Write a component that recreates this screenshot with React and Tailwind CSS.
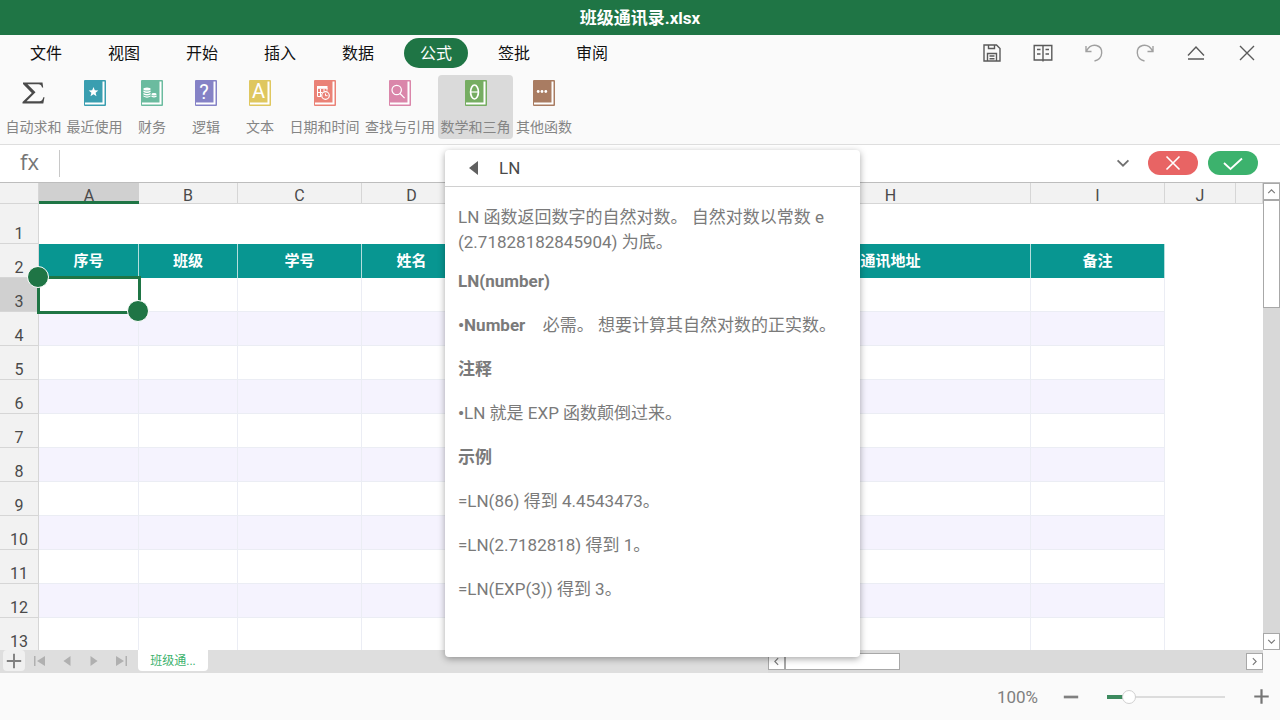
import React from "react";

const MENUS = ["文件", "视图", "开始", "插入", "数据", "公式", "签批", "审阅"];

const glyph = "fill-white font-[Roboto,sans-serif]";

const TOOLS = [
  { label: "最近使用", width: "w-[61px]", color: "#3a9eb0", art: <path fill="#fff" d="M10.5 7l1.3 3.3 3.5.2-2.7 2.3.9 3.4-3-1.9-3 1.9.9-3.4-2.7-2.3 3.5-.2z" /> },
  {
    label: "财务", width: "w-[54px]", color: "#6bbb9f",
    art: (
      <g fill="#fff">
        <ellipse cx="7" cy="9" rx="3.6" ry="1.5" />
        <path d="M3.4 10.6q3.6 2 7.2 0v1.5q-3.6 2-7.2 0zM3.4 13q3.6 2 7.2 0v1.5q-3.6 2-7.2 0zM3.4 15.4q3.6 2 7.2 0v1.2q-3.6 2.2-7.2 0z" />
        <ellipse cx="14" cy="14.3" rx="2.6" ry="1.2" />
        <path d="M11.4 15.6q2.6 1.5 5.2 0v1.2q-2.6 1.6-5.2 0z" />
      </g>
    ),
  },
  { label: "逻辑", width: "w-[54px]", color: "#8582c6", art: <text x="10" y="19" textAnchor="middle" fontSize="20" className={glyph}>?</text> },
  { label: "文本", width: "w-[54px]", color: "#dfc75f", art: <text x="10.5" y="18" textAnchor="middle" fontSize="20" className={glyph}>A</text> },
  {
    label: "日期和时间", width: "w-[75px]", color: "#ea8277",
    art: (
      <g>
        <path fill="#fff" d="M4 6h10.5v2.8H4z" />
        <path fill="none" stroke="#fff" d="M4.5 8v8.5H8M4.5 12.5h5M7.5 9v7.5M11 9v2M14 8v2.5" />
        <circle cx="12.5" cy="15.5" r="3.8" fill="#ea8277" stroke="#fff" strokeWidth="1.2" />
        <path fill="none" stroke="#fff" d="M12.5 13.5v2.2h2" />
      </g>
    ),
  },
  {
    label: "查找与引用", width: "w-[76px]", color: "#da86aa",
    art: (
      <g fill="none" stroke="#fff" strokeWidth="1.2">
        <circle cx="8.7" cy="10" r="4.7" />
        <path d="M12 13.5l4.6 4.7" />
      </g>
    ),
  },
  {
    label: "数学和三角", width: "w-[75px]", color: "#76ad62", active: true,
    art: (
      <g fill="none" stroke="#fff">
        <ellipse cx="10.5" cy="12" rx="3.9" ry="7" strokeWidth="1.7" />
        <path d="M6.5 12h8" strokeWidth="1.2" />
      </g>
    ),
  },
  {
    label: "其他函数", width: "w-[62px]", color: "#a97c62",
    art: (
      <g fill="#fff">
        <circle cx="6.2" cy="11.5" r="1.4" />
        <circle cx="10" cy="11.5" r="1.4" />
        <circle cx="13.8" cy="11.5" r="1.4" />
      </g>
    ),
  },
];

const COLUMNS = [
  { id: "A", width: "w-[100px]", title: "序号" },
  { id: "B", width: "w-[99px]", title: "班级" },
  { id: "C", width: "w-[124px]", title: "学号" },
  { id: "D", width: "w-[100px]", title: "姓名" },
  { id: "E", width: "w-[96px]", title: "" },
  { id: "F", width: "w-[96px]", title: "" },
  { id: "G", width: "w-[97px]", title: "" },
  { id: "H", width: "w-[280px]", title: "通讯地址" },
  { id: "I", width: "w-[134px]", title: "备注" },
  { id: "J", width: "w-[71px]" },
  { id: "", width: "" },
];

const DATA_ROWS = [3, 4, 5, 6, 7, 8, 9, 10, 11, 12, 13];

function Book({ color, children }) {
  return (
    <svg width="24" height="26" viewBox="0 0 24 26" aria-hidden="true">
      <rect x="1" y="0" width="22" height="26" rx="1" fill={color} />
      <path d="M20.5 1.5V23.5H2" fill="none" stroke="#fff" strokeWidth="2" />
      {children}
    </svg>
  );
}

function Line({ size = 20, width = 1.4, children }) {
  return (
    <svg width={size} height={size} viewBox="0 0 20 20" fill="none" stroke="currentColor" strokeWidth={width} aria-hidden="true">
      {children}
    </svg>
  );
}

function WindowButton({ label, faint, children }) {
  return (
    <button type="button" aria-label={label} className={`flex h-8 w-[51px] items-center justify-center ${faint ? "text-[#a0a0a0]" : "text-[#5a5a5a]"}`}>
      <Line>{children}</Line>
    </button>
  );
}

function Ribbon() {
  return (
    <div className="flex h-[74px] shrink-0 items-start border-b border-[#dedede] pt-1 pl-[3px]">
      <button type="button" className="flex h-16 w-[61px] flex-col items-center gap-[11px] pt-[5px] text-sm leading-5 whitespace-nowrap text-[#858585]">
        <svg width="24" height="26" viewBox="0 0 24 26" aria-hidden="true">
          <path fill="#4a4a4a" d="M1 2.5H20.5L21.2 7.5H20Q19.2 4.2 16.5 4.2H5.5L13.5 12.2 4.5 21.2H17.5Q20.5 21.2 21.3 17.3H22.5L21.3 23.5H.5V22L9.800 13 1 4z" />
        </svg>
        自动求和
      </button>
      {TOOLS.map((t) => (
        <button key={t.label} type="button" className={`flex h-16 flex-col items-center gap-[11px] rounded pt-[5px] text-sm leading-5 whitespace-nowrap text-[#858585] ${t.width} ${t.active ? "bg-[#dadada]" : ""}`}>
          <Book color={t.color}>{t.art}</Book>
          {t.label}
        </button>
      ))}
    </div>
  );
}

function FormulaBar() {
  return (
    <div className="flex h-[37px] shrink-0 items-center gap-[10px] bg-white pr-[22px] pb-px">
      <label htmlFor="formula" className="w-[50px] pb-1 pl-[20px] font-['Open_Sans',sans-serif] text-[22px] leading-7 text-[#757575]">fx</label>
      <input id="formula" type="text" className="-ml-px h-[27px] min-w-0 flex-1 border-l border-[#c8c8c8] px-2 outline-none" />
      <button type="button" aria-label="展开编辑栏" className="flex w-[30px] justify-center text-[#707070]">
        <Line size={18} width={2}><path d="M4 7l6 6 6-6" /></Line>
      </button>
      <button type="button" aria-label="取消" className="flex h-6 w-[50px] items-center justify-center rounded-full bg-[#e86464] text-white">
        <Line size={20} width={1.6}><path d="M3.5 3.5l13 13M16.5 3.5l-13 13" /></Line>
      </button>
      <button type="button" aria-label="确认" className="flex h-6 w-[50px] items-center justify-center rounded-full bg-[#3cb26d] text-white">
        <Line size={20} width={1.8}><path d="M1 10l6.5 6L19 5.5" /></Line>
      </button>
    </div>
  );
}

function Sheet() {
  const rowHead = "border-r border-b border-[#d6d6d6] p-0 text-center align-bottom text-base leading-[18px] font-normal text-[#4a4a4a]";
  return (
    <table className="w-full table-fixed border-separate border-spacing-0">
      <colgroup>
        <col className="w-[39px]" />
        {COLUMNS.map((c, i) => <col key={i} className={c.width} />)}
      </colgroup>
      <thead>
        <tr className="h-[21px]">
          <td className="border-r border-b border-[#d6d6d6] bg-[#f2f2f2] p-0" />
          {COLUMNS.map((c, i) => (
            <th key={i} scope="col" className={`border-b px-0 pt-[6px] pb-0 text-base leading-[14px] font-normal text-[#4a4a4a] ${i === 0 ? "border-[#1f7545] bg-[#d0d0d0] shadow-[inset_0_-2px_0_#1f7545]" : "border-r border-[#d6d6d6] bg-[#f2f2f2]"}`}>
              {c.id}
            </th>
          ))}
        </tr>
      </thead>
      <tbody>
        <tr className="h-10">
          <th scope="row" className={`${rowHead} bg-[#f2f2f2]`}>1</th>
          <td colSpan={11} className="bg-white p-0" />
        </tr>
        <tr className="h-[34px]">
          <th scope="row" className={`${rowHead} bg-[#f2f2f2]`}>2</th>
          {COLUMNS.map((c, i) =>
            i < 9 ? (
              <td key={i} className="border-r border-[#b5dedd] bg-[#089691] p-0 text-center text-[15px] leading-5 font-bold text-white">{c.title}</td>
            ) : (
              <td key={i} className="bg-white p-0" />
            )
          )}
        </tr>
        {DATA_ROWS.map((n) => (
          <tr key={n} className="h-[34px]">
            <th scope="row" className={`${rowHead} ${n === 3 ? "bg-[#d0d0d0]" : "bg-[#f2f2f2]"}`}>{n}</th>
            {COLUMNS.map((c, i) => (
              <td key={i} className={`p-0 ${i < 9 ? `border-r border-b border-[#ebedf4] ${n % 2 === 0 ? "bg-[#f5f3fe]" : "bg-white"}` : "bg-white"}`}>
                {n === 3 && i === 0 && (
                  <div className="relative h-[33px]">
                    <div className="absolute -top-[2px] -right-[3px] -bottom-[3px] -left-[2px] border-[3px] border-[#1f7545]">
                      <span className="absolute -top-[13px] -left-[13px] size-[22px] rounded-full border border-white bg-[#1f7545]" />
                      <span className="absolute -right-[11px] -bottom-[11px] size-[22px] rounded-full border border-white bg-[#1f7545]" />
                    </div>
                  </div>
                )}
              </td>
            ))}
          </tr>
        ))}
      </tbody>
    </table>
  );
}

function ScrollButton({ label, d }) {
  return (
    <button type="button" aria-label={label} className="flex size-[17px] shrink-0 items-center justify-center border border-[#a8a8a8] bg-white text-[#777]">
      <Line size={11} width={2}><path d={d} /></Line>
    </button>
  );
}

function NavButton({ label, d }) {
  return (
    <button type="button" aria-label={label} className="flex h-full w-[27px] items-center justify-center text-[#b0b0b0]">
      <svg width="14" height="12" viewBox="0 0 14 12" fill="currentColor" aria-hidden="true"><path d={d} /></svg>
    </button>
  );
}

function FunctionHelp() {
  return (
    <section className="absolute top-[150px] left-[445px] flex h-[507px] w-[415px] flex-col rounded-sm bg-white shadow-[0_2px_7px_rgba(0,0,0,0.35)]">
      <header className="flex h-[37px] items-center gap-[18px] border-b border-[#d0d0d0] pl-[22px]">
        <button type="button" aria-label="返回" className="flex w-[14px] justify-center text-[#606060]">
          <svg width="10" height="14" viewBox="0 0 10 14" fill="currentColor" aria-hidden="true"><path d="M9 0v14L0 7z" /></svg>
        </button>
        <h2 className="text-[17px] leading-6 text-[#4a4a4a]">LN</h2>
      </header>
      <div className="flex flex-col gap-[19px] px-[13px] pt-[18px] text-[17px] leading-[25px] text-[#7a7a7a]">
        <div className="flex flex-col gap-[14px]">
          <p>LN 函数返回数字的自然对数。 自然对数以常数 e (2.71828182845904) 为底。</p>
          <h3 className="font-bold">LN(number)</h3>
        </div>
        <p><b>•Number</b>&emsp;必需。 想要计算其自然对数的正实数。</p>
        <h3 className="font-bold">注释</h3>
        <p><b>•</b>LN 就是 EXP 函数颠倒过来。</p>
        <h3 className="font-bold">示例</h3>
        <p>=LN(86) 得到 4.4543473。</p>
        <p>=LN(2.7182818) 得到 1。</p>
        <p>=LN(EXP(3)) 得到 3。</p>
      </div>
    </section>
  );
}

export default function App() {
  return (
    <div lang="zh-CN" className="relative flex h-screen flex-col overflow-hidden bg-[#fafafa] font-[Roboto,'Noto_Sans_CJK_SC',sans-serif]">
      <header className="flex h-[35px] shrink-0 items-center justify-center bg-[#1f7545]">
        <h1 className="text-[17px] leading-6 font-bold text-white">班级通讯录.xlsx</h1>
      </header>

      <div className="flex h-9 shrink-0 items-center justify-between pr-2 pl-[14px]">
        <nav className="flex gap-[14px]">
          {MENUS.map((m) => (
            <button key={m} type="button" className={`h-[30px] w-16 rounded-full pt-px text-base leading-6 ${m === "公式" ? "bg-[#1f7545] text-white" : "text-[#111]"}`}>{m}</button>
          ))}
        </nav>
        <div className="flex">
          <WindowButton label="保存">
            <path d="M2 2h12.500L18 5.500V18H2zM6.500 2v3.500h6V2M5.500 18v-7.500h9V18M7.500 13h5M7.500 15.700h5" />
          </WindowButton>
          <WindowButton label="阅读视图">
            <path d="M1.200 2.500H10V17H1.200zM10 2.500h8.800V17H10M10 17v1.500M4 6.500h3.500M4 11h3.500M12.500 6.500H16M12.500 11H16" />
          </WindowButton>
          <WindowButton label="撤销" faint>
            <path d="M2 3v5.500h5.500M2.500 8C5 3 9 1.800 12.500 2.500c7 1.800 7.500 13-2 15.500" />
          </WindowButton>
          <WindowButton label="恢复" faint>
            <path d="M18 3v5.500h-5.500M17.500 8C15 3 11 1.800 7.500 2.500c-7 1.800-7.500 13 2 15.500" />
          </WindowButton>
          <WindowButton label="收起功能区">
            <path d="M2 12.500l8-8.500 8 8.500M2 16h16" />
          </WindowButton>
          <WindowButton label="关闭">
            <path d="M3 3l14 14M17 3L3 17" />
          </WindowButton>
        </div>
      </div>

      <Ribbon />
      <FormulaBar />

      <main className="flex min-h-0 flex-1 border-t border-[#bdbdbd]">
        <div className="min-w-0 flex-1 overflow-hidden bg-white">
          <Sheet />
        </div>
        <div className="flex w-[17px] shrink-0 flex-col bg-[#d8d8d8]">
          <ScrollButton label="向上滚动" d="M4 13l6-6 6 6" />
          <div className="h-[108px] border border-[#a8a8a8] bg-white" />
          <div className="flex-1" />
          <ScrollButton label="向下滚动" d="M4 7l6 6 6-6" />
        </div>
      </main>

      <div className="mr-[17px] flex h-[23px] shrink-0 bg-[#dedede]">
        <div className="flex h-[22px] flex-1 pl-[3px]">
          <button type="button" aria-label="新建工作表" className="mr-px flex h-[21px] w-[22px] items-center justify-center rounded bg-[#f0f0f0] text-[#808080]">
            <Line size={16} width={2.4}><path d="M10 1v18M1 10h18" /></Line>
          </button>
          <NavButton label="第一张" d="M1 1h1.500v10H1zM12 1v10L4 6z" />
          <NavButton label="上一张" d="M10.500 1v10L3.500 6z" />
          <NavButton label="下一张" d="M3.500 1v10l7-5z" />
          <NavButton label="最后一张" d="M11.500 1H13v10h-1.500zM2 1v10l8-5z" />
          <button type="button" className="ml-1 h-[21px] w-[70px] rounded-b bg-white text-xs leading-5 text-[#3cb26d]">班级通...</button>
        </div>
        <div className="flex w-[495px] items-center bg-[#dadada]">
          <ScrollButton label="向左滚动" d="M13 4l-6 6 6 6" />
          <div className="h-[17px] w-[115px] border border-[#a8a8a8] bg-white" />
          <div className="flex-1" />
          <ScrollButton label="向右滚动" d="M7 4l6 6-6 6" />
        </div>
      </div>

      <footer className="flex h-[47px] shrink-0 items-center justify-end pr-[10px]">
        <label htmlFor="zoom" className="text-[17px] leading-6 text-[#808080]">100%</label>
        <button type="button" aria-label="缩小" className="ml-[24px] flex w-[18px] justify-center text-[#808080]">
          <Line size={18} width={3}><path d="M2 10h16" /></Line>
        </button>
        <input
          id="zoom"
          type="range"
          min="50"
          max="400"
          defaultValue="100"
          className="mx-[27px] h-4 w-[118px] appearance-none bg-[linear-gradient(#3c8a5e,#3c8a5e),linear-gradient(#dcdcdc,#dcdcdc)] bg-[length:16px_4px,100%_2px] bg-[position:left_center,left_center] bg-no-repeat [&::-webkit-slider-thumb]:size-[14px] [&::-webkit-slider-thumb]:appearance-none [&::-webkit-slider-thumb]:rounded-full [&::-webkit-slider-thumb]:border [&::-webkit-slider-thumb]:border-[#d0d0d0] [&::-webkit-slider-thumb]:bg-white"
        />
        <button type="button" aria-label="放大" className="flex w-[18px] justify-center text-[#757575]">
          <Line size={17} width={2.6}><path d="M10 1.500v17M1.500 10h17" /></Line>
        </button>
      </footer>

      <FunctionHelp />
    </div>
  );
}
